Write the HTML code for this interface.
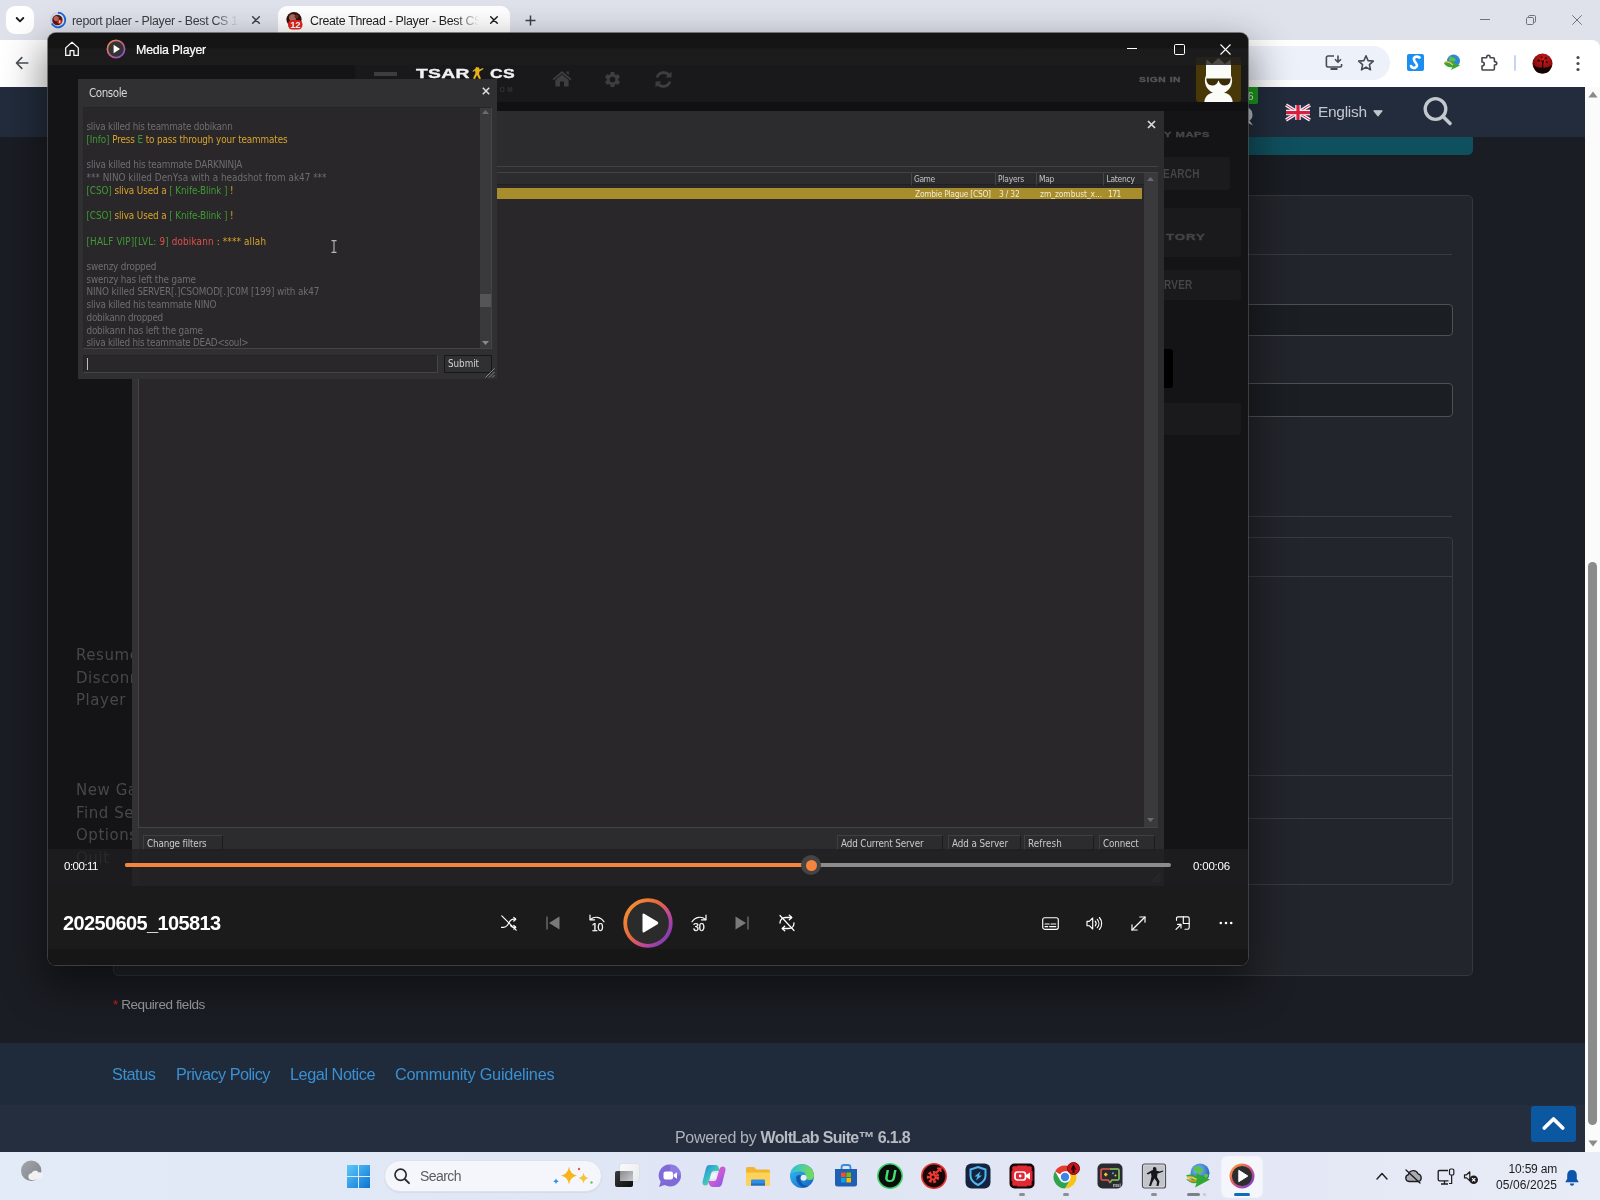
<!DOCTYPE html>
<html lang="en">
<head>
<meta charset="utf-8">
<title>Create Thread - Player - Best CS</title>
<style>
*{box-sizing:border-box;margin:0;padding:0}
html,body{width:1600px;height:1200px;overflow:hidden;background:#1a1d23;font-family:"Liberation Sans","DejaVu Sans",sans-serif;}
.abs{position:absolute}
#root{position:relative;width:1600px;height:1200px;overflow:hidden;will-change:transform}
svg{display:block;overflow:visible}
/* ---------- chrome ---------- */
#tabbar{left:0;top:0;width:1600px;height:87px;background:#dfe2eb}
#toolbar{left:0;top:40px;width:1600px;height:47px;background:#fff;border-radius:0 8px 0 0}
.tabtxt{font-size:12.4px;color:#3c4043;white-space:nowrap;letter-spacing:-0.32px;line-height:15px}
/* ---------- page ---------- */
#page{left:0;top:87px;width:1585px;height:1065px;background:#1a1d23;overflow:hidden}
#pghead{left:0;top:0;width:1585px;height:50px;background:#222c3c}
#teal{left:113px;top:50px;width:1360px;height:18px;background:#0f505e;border-radius:0 0 5px 0}
#form{left:113px;top:108px;width:1360px;height:781px;background:#22252b;border:1px solid #34373d;border-radius:5px}
.hr{height:1px;background:#383b41}
.inp{background:#1b1e23;border:1px solid #4d5055;border-radius:4px}
#foot1{left:0;top:956px;width:1585px;height:62px;background:#1f2a3a}
#foot2{left:0;top:1018px;width:1585px;height:47px;background:#242e3f}
#foot1 a{position:absolute;top:22px;font-size:16.3px;color:#3b90d3;text-decoration:none;white-space:nowrap;letter-spacing:-0.35px;line-height:19px}
/* ---------- scrollbar ---------- */
#sb{left:1585px;top:87px;width:15px;height:1065px;background:#fbfbfb}
/* ---------- taskbar ---------- */
#taskbar{left:0;top:1152px;width:1600px;height:48px;background:linear-gradient(90deg,#e2ebf7 0%,#dfe5f4 45%,#e3e6f5 75%,#e8ecf6 100%)}
.ti{position:absolute;top:10px;width:28px;height:28px}
/* ---------- media player ---------- */
#mp{left:48px;top:33px;width:1200px;height:932px;background:#141316;border-radius:8px;overflow:hidden;box-shadow:0 0 0 1px rgba(80,80,80,.700),0 18px 40px 6px rgba(0,0,0,.450)}
#mptitle{left:0;top:0;width:1200px;height:32px;background:linear-gradient(rgba(20,20,20,.85) 0,rgba(21,21,21,.85) 45%,rgba(30,29,30,.8) 50%,rgba(30,29,30,.8) 100%)}
#video{left:0;top:32px;width:1200px;height:900px;background:#141316;overflow:hidden}
.xb{-webkit-text-stroke:0.350px currentColor}
.gm{position:absolute;left:28px;font-family:"DejaVu Sans",sans-serif;font-size:15px;letter-spacing:0.55px;color:#48474a;white-space:nowrap}
.gf{font-family:"DejaVu Sans Condensed","DejaVu Sans",sans-serif}
.cl{position:absolute;left:2.5px;white-space:nowrap;font-size:9.8px;line-height:12.75px;color:#6e6d70;letter-spacing:-0.1px}
.g{color:#3f9a33}.y{color:#d9a42a}.r{color:#e0504a}
.sl{font-size:8.4px;line-height:12px;color:#c4c3c5;white-space:nowrap}
.btn{position:absolute;height:16px;border:1px solid #3f3e41;border-bottom-color:#1c1b1d;border-right-color:#1c1b1d;font-size:9.800px;line-height:16px;color:#c9c8ca;padding-left:3px;white-space:nowrap}
</style>
</head>
<body>
<div id="root">

<!-- ================= CHROME TAB BAR ================= -->
<div id="tabbar" class="abs">
  <!-- tab search -->
  <div class="abs" style="left:6px;top:6px;width:28px;height:28px;background:#fff;border-radius:9px"></div>
  <svg class="abs" style="left:14px;top:15px" width="12" height="10" viewBox="0 0 12 10"><path d="M2.700 3 L6 6.300 L9.300 3" fill="none" stroke="#1f1f1f" stroke-width="1.9" stroke-linecap="round" stroke-linejoin="round"/></svg>
  <!-- tab 1 -->
  <svg class="abs" style="left:49px;top:11px" width="18" height="18" viewBox="0 0 18 18">
    <circle cx="9" cy="9" r="7.2" fill="none" stroke="#c9d3ea" stroke-width="1.8"/>
    <path d="M9 1.8 A7.2 7.2 0 1 1 2.8 12.6" fill="none" stroke="#1a67d9" stroke-width="1.9"/>
    <circle cx="8.4" cy="9" r="5.2" fill="#5a1512"/>
    <circle cx="7.2" cy="7.6" r="2.6" fill="#b8685a"/>
    <circle cx="10.6" cy="10.8" r="2.3" fill="#e0322c"/>
    <rect x="10.2" y="9.4" width="1" height="2.6" fill="#fff"/>
  </svg>
  <div class="abs tabtxt" style="left:72px;top:13.800px;width:166px;overflow:hidden;-webkit-mask-image:linear-gradient(90deg,#000 86%,transparent 100%);mask-image:linear-gradient(90deg,#000 86%,transparent 100%)">report plaer - Player - Best CS 1.6</div>
  <svg class="abs" style="left:252px;top:16px" width="8" height="8" viewBox="0 0 8 8"><path d="M0.700 0.700 L7.300 7.300 M7.300 0.700 L0.700 7.300" stroke="#3c4043" stroke-width="1.500" stroke-linecap="round"/></svg>
  <!-- tab 2 active -->
  <div class="abs" style="left:278px;top:6px;width:232px;height:34px;background:#fff;border-radius:9px 9px 0 0"></div>
  <svg class="abs" style="left:270px;top:32px" width="8" height="8" viewBox="0 0 8 8"><path d="M8 0 V8 H0 A8 8 0 0 0 8 0Z" fill="#fff"/></svg>
  <svg class="abs" style="left:510px;top:32px" width="8" height="8" viewBox="0 0 8 8"><path d="M0 0 V8 H8 A8 8 0 0 1 0 0Z" fill="#fff"/></svg>
  <svg class="abs" style="left:285px;top:11px" width="20" height="20" viewBox="0 0 20 20">
    <circle cx="9" cy="8.6" r="7.6" fill="#35100f"/>
    <circle cx="7.6" cy="6.8" r="3.6" fill="#a86a5c"/>
    <circle cx="11.5" cy="5.5" r="2" fill="#6d2a24"/>
    <rect x="3" y="9" width="14.5" height="9.5" rx="4.5" fill="#e3241d"/>
    <text x="10.2" y="16.8" font-family="Liberation Sans,sans-serif" font-size="9.5" font-weight="700" fill="#fff" text-anchor="middle" letter-spacing="-0.4">12</text>
  </svg>
  <div class="abs tabtxt" style="left:310px;top:13.800px;width:169px;color:#1f1f1f;overflow:hidden;-webkit-mask-image:linear-gradient(90deg,#000 86%,transparent 100%);mask-image:linear-gradient(90deg,#000 86%,transparent 100%)">Create Thread - Player - Best CS 1.6</div>
  <svg class="abs" style="left:490px;top:16px" width="8" height="8" viewBox="0 0 8 8"><path d="M0.700 0.700 L7.300 7.300 M7.300 0.700 L0.700 7.300" stroke="#1f1f1f" stroke-width="1.500" stroke-linecap="round"/></svg>
  <!-- new tab -->
  <svg class="abs" style="left:524.500px;top:14.500px" width="11" height="11" viewBox="0 0 11 11"><path d="M5.500 0.500 V10.500 M0.500 5.500 H10.500" stroke="#3c4043" stroke-width="1.500"/></svg>
  <!-- window controls -->
  <svg class="abs" style="left:1480px;top:19px" width="10" height="1" viewBox="0 0 10 1"><rect width="10" height="1" fill="#6f737c"/></svg>
  <svg class="abs" style="left:1526px;top:15px" width="10" height="10" viewBox="0 0 10 10"><rect x="0.500" y="2.500" width="7" height="7" rx="1.200" fill="none" stroke="#6f737c"/><path d="M2.500 2.300 V1.700 A1.200 1.200 0 0 1 3.700 0.500 H8.300 A1.200 1.200 0 0 1 9.500 1.700 V6.300 A1.200 1.200 0 0 1 8.300 7.500 H7.700" fill="none" stroke="#6f737c"/></svg>
  <svg class="abs" style="left:1572px;top:15px" width="10" height="10" viewBox="0 0 10 10"><path d="M0.300 0.300 L9.700 9.700 M9.700 0.300 L0.300 9.700" stroke="#6f737c" stroke-width="1"/></svg>
</div>
<div id="toolbar" class="abs">
  <svg class="abs" style="left:15px;top:16px" width="14" height="14" viewBox="0 0 14 14"><path d="M12.800 7 H2 M6.800 1.600 L1.500 7 L6.800 12.400" fill="none" stroke="#4a4e55" stroke-width="1.600" stroke-linecap="round" stroke-linejoin="round"/></svg>
  <!-- omnibox -->
  <div class="abs" style="left:70px;top:6px;width:1320px;height:34px;border-radius:17px;background:#edf1fa"></div>
  <svg class="abs" style="left:1325px;top:14px" width="18" height="18" viewBox="0 0 18 18"><path d="M9 2 H3 A1.6 1.6 0 0 0 1.4 3.6 V11.4 A1.6 1.6 0 0 0 3 13 H15 A1.6 1.6 0 0 0 16.6 11.4 V10" fill="none" stroke="#474b52" stroke-width="1.6"/><path d="M5.5 16 H12.5 V14 H5.5Z" fill="#474b52"/><path d="M13 1.5 V8 M10 5.2 L13 8.2 L16 5.2" fill="none" stroke="#474b52" stroke-width="1.6"/></svg>
  <svg class="abs" style="left:1357px;top:14px" width="18" height="18" viewBox="0 0 18 18"><path d="M9 1.8 L11.1 6.6 L16.3 7.1 L12.4 10.6 L13.5 15.8 L9 13.1 L4.5 15.8 L5.6 10.6 L1.7 7.1 L6.9 6.6Z" fill="none" stroke="#474b52" stroke-width="1.6" stroke-linejoin="round"/></svg>
  <!-- S extension -->
  <svg class="abs" style="left:1407px;top:14px" width="17" height="17" viewBox="0 0 17 17"><rect width="17" height="17" rx="2" fill="#1b8ef0"/><path d="M12.5 3.5 C9 1.5 5.5 3.5 7.5 7 C9.5 10 11.5 11.5 8.5 13.5 C6.5 14.5 4.5 13.5 4 12" fill="none" stroke="#fff" stroke-width="2.6" stroke-linecap="round"/></svg>
  <!-- IDM -->
  <svg class="abs" style="left:1443px;top:13px" width="19" height="19" viewBox="0 0 19 19"><circle cx="10.5" cy="8" r="6.5" fill="#2f86d6"/><path d="M7 3 C9 5 12 4 13 7 C11 9 8 9 6 7Z" fill="#5fbf3a"/><path d="M1 10 C4 7 8 9 10 11 L9 8.5 L17 12.5 L8 17 L9.5 14 C6 15 2 13 1 10Z" fill="#3aa635"/><path d="M2 9 C5 8 8 10 10 12" fill="none" stroke="#e8c23a" stroke-width="1.4"/></svg>
  <!-- puzzle -->
  <svg class="abs" style="left:1480px;top:13px" width="19" height="19" viewBox="0 0 19 19"><path d="M2 4.800 H6.600 Q6.600 2.200 8.400 2.200 Q10.200 2.200 10.200 4.800 H13.200 Q14.400 4.800 14.400 6 V8.600 Q16.800 8.600 16.800 10.300 Q16.800 12 14.400 12 V15.800 Q14.400 17 13.200 17 H2.800 Q2 17 2 16.200 V13 Q4.300 12.800 4.300 11 Q4.300 9.200 2 9Z" fill="none" stroke="#43474e" stroke-width="1.600" stroke-linejoin="round"/></svg>
  <div class="abs" style="left:1514px;top:15px;width:2px;height:16px;background:#c7d4f3;border-radius:1px"></div>
  <!-- avatar -->
  <svg class="abs" style="left:1532px;top:13px" width="21" height="21" viewBox="0 0 22 22"><defs><radialGradient id="avg" cx=".55" cy=".3" r=".75"><stop offset="0" stop-color="#d81a1a"/><stop offset=".6" stop-color="#8e0d0f"/><stop offset="1" stop-color="#1a0303"/></radialGradient></defs><circle cx="11" cy="11" r="10.500" fill="url(#avg)"/><path d="M1.500 13 Q6 16 10.300 15.500 L10.600 10 L9 7 L11 8.500 L13 6.500 L12 10 L11.800 15.500 Q16 16 20.500 13 Q19 21.500 11 21.500 Q3 21.500 1.500 13Z" fill="#150203"/><circle cx="7" cy="8" r="1.500" fill="#2a0405" opacity=".8"/><circle cx="14.500" cy="5.500" r="1.300" fill="#2a0405" opacity=".8"/><circle cx="15.500" cy="9.500" r="1.300" fill="#2a0405" opacity=".7"/><circle cx="10" cy="4.500" r="1.200" fill="#2a0405" opacity=".7"/></svg>
  <svg class="abs" style="left:1576px;top:15px" width="4" height="18" viewBox="0 0 4 18"><circle cx="2" cy="2.5" r="1.6" fill="#474b52"/><circle cx="2" cy="8.5" r="1.6" fill="#474b52"/><circle cx="2" cy="14.5" r="1.6" fill="#474b52"/></svg>
</div>

<!-- ================= PAGE ================= -->
<div id="page" class="abs">
  <div id="pghead" class="abs">
    <div class="abs" style="left:1238px;top:0;width:20px;height:17px;background:#1c9a1f;border-radius:0 0 2px 2px;color:#e8f5e8;font-size:11px;text-align:right;padding-right:4.500px;line-height:18px">6</div>
    <svg class="abs" style="left:1228px;top:18px" width="26" height="22" viewBox="0 0 26 22"><path d="M13 1.500 Q24.500 1.500 24.500 9.500 Q24.500 14 21.500 15.500 L25 20.500 L18 17 Q16 17.500 13 17.500Z" fill="#b9bdc4"/></svg>
    <!-- flag -->
    <svg class="abs" style="left:1286px;top:18px" width="24" height="15" viewBox="0 0 48 30">
      <rect width="48" height="30" fill="#27335a"/>
      <path d="M0 0 L48 30 M48 0 L0 30" stroke="#f4f4f6" stroke-width="6.500"/>
      <path d="M0 0 L48 30 M48 0 L0 30" stroke="#d92040" stroke-width="2"/>
      <path d="M24 0 V30 M0 15 H48" stroke="#f4f4f6" stroke-width="11"/>
      <path d="M24 0 V30 M0 15 H48" stroke="#d92040" stroke-width="6.500"/>
    </svg>
    <div class="abs" style="left:1318px;top:16px;font-size:15.500px;color:#c3c7ce;letter-spacing:-0.300px;white-space:nowrap;line-height:18px">English</div>
    <svg class="abs" style="left:1372.500px;top:22.500px" width="10" height="7" viewBox="0 0 10 7"><path d="M1 0.800 H9 L5 5.800Z" fill="#c3c7ce" stroke="#c3c7ce" stroke-width="1.200" stroke-linejoin="round"/></svg>
    <svg class="abs" style="left:1422px;top:9px" width="32" height="32" viewBox="0 0 32 32"><circle cx="13.500" cy="13" r="10.300" fill="none" stroke="#c3c7ce" stroke-width="3.300"/><path d="M21 20.500 L28 27.500" stroke="#c3c7ce" stroke-width="3.600" stroke-linecap="round"/></svg>
  </div>
  <div id="teal" class="abs"></div>
  <div id="form" class="abs">
    <div class="abs hr" style="left:20px;top:58px;width:1318px"></div>
    <div class="abs inp" style="left:20px;top:108px;width:1319px;height:32px"></div>
    <div class="abs inp" style="left:20px;top:187px;width:1319px;height:34px"></div>
    <div class="abs hr" style="left:20px;top:320px;width:1318px"></div>
    <div class="abs" style="left:20px;top:341px;width:1319px;height:348px;border:1px solid #383b41;border-radius:4px"></div>
    <div class="abs hr" style="left:20px;top:380px;width:1318px"></div>
    <div class="abs hr" style="left:20px;top:579px;width:1318px"></div>
    <div class="abs hr" style="left:20px;top:622px;width:1318px"></div>
  </div>
  <div class="abs" style="left:113px;top:910px;font-size:13.500px;color:#9b9ea4;white-space:nowrap;letter-spacing:-0.420px"><span style="color:#d8201c">*</span> Required fields</div>
  <div id="foot1" class="abs">
    <a style="left:112px;letter-spacing:-0.440px">Status</a>
    <a style="left:176px;letter-spacing:-0.530px">Privacy Policy</a>
    <a style="left:290px;letter-spacing:-0.460px">Legal Notice</a>
    <a style="left:395px;letter-spacing:-0.220px">Community Guidelines</a>
  </div>
  <div id="foot2" class="abs">
    <div class="abs" style="left:675px;top:22.500px;font-size:16px;color:#aeb2b8;white-space:nowrap;letter-spacing:-0.310px;line-height:19px">Powered by <b style="color:#b8bcc2;letter-spacing:-0.640px">WoltLab Suite&trade; 6.1.8</b></div>
    <div class="abs" style="left:1531px;top:1px;width:45px;height:36px;background:#0b57a0;border-radius:3px"></div>
    <svg class="abs" style="left:1541px;top:10px" width="25" height="17" viewBox="0 0 25 17"><path d="M3.300 13 L12.500 4 L21.700 13" fill="none" stroke="#fff" stroke-width="3.800" stroke-linecap="round" stroke-linejoin="round"/></svg>
  </div>
</div>
<div id="sb" class="abs">
  <svg class="abs" style="left:3px;top:4px" width="10" height="7" viewBox="0 0 10 7"><path d="M5 0.5 L9.6 6.5 H0.4Z" fill="#8b8b8b"/></svg>
  <div class="abs" style="left:3px;top:475px;width:9px;height:563px;border-radius:5px;background:#8b8b8b"></div>
  <svg class="abs" style="left:3px;top:1053px" width="10" height="7" viewBox="0 0 10 7"><path d="M5 6.5 L9.6 0.5 H0.4Z" fill="#8b8b8b"/></svg>
</div>

<!-- ================= TASKBAR ================= -->
<div id="taskbar" class="abs">
  <!-- weather -->
  <svg class="abs" style="left:20px;top:6px" width="26" height="24" viewBox="0 0 26 24"><defs><linearGradient id="wg" x1="0" y1="0" x2="1" y2="1"><stop offset="0" stop-color="#a3a6ab"/><stop offset="1" stop-color="#7f8287"/></linearGradient></defs><circle cx="11.200" cy="12.700" r="10.200" fill="url(#wg)"/><path d="M11 22 A3.400 3.400 0 0 1 11.500 15.300 A4 4 0 0 1 18.600 14.400 A3.300 3.300 0 0 1 23 17.400 Q23 19.500 21 20.300 Q17 22.500 11 22Z" fill="#f1f1f3"/></svg>
  <!-- windows logo -->
  <svg class="abs" style="left:347px;top:13px" width="23" height="23" viewBox="0 0 23 23"><defs><linearGradient id="wl" x1="0" y1="0" x2="1" y2="1"><stop offset="0" stop-color="#5dc9fb"/><stop offset="1" stop-color="#0a74d2"/></linearGradient></defs><path d="M0 0 H11 V11 H0Z M12 0 H23 V11 H12Z M0 12 H11 V23 H0Z M12 12 H23 V23 H12Z" fill="url(#wl)"/></svg>
  <!-- search -->
  <div class="abs" style="left:384px;top:8px;width:218px;height:32px;border-radius:16px;background:#f4f6fc;border:1px solid #dde1ec;box-shadow:0 1px 1px rgba(120,130,160,.120)"></div>
  <svg class="abs" style="left:393px;top:15px" width="18" height="18" viewBox="0 0 18 18"><circle cx="7.6" cy="7.8" r="5.6" fill="none" stroke="#2a2a2d" stroke-width="1.7"/><path d="M11.8 12 L16 16.2" stroke="#2a2a2d" stroke-width="1.9" stroke-linecap="round"/></svg>
  <div class="abs" style="left:420px;top:15px;font-size:14px;color:#5a5c62;letter-spacing:-0.55px;line-height:18px;white-space:nowrap">Search</div>
  <svg class="abs" style="left:552px;top:12px" width="44" height="24" viewBox="0 0 44 24"><path d="M17 2.5 Q18 10 25 11.5 Q18 13 17 20.5 Q16 13 9 11.5 Q16 10 17 2.5Z" fill="#f7b51b"/><path d="M31.5 8.5 Q32.2 13 36.5 14 Q32.2 15 31.5 19.5 Q30.8 15 26.5 14 Q30.8 13 31.5 8.5Z" fill="#f9c339"/><path d="M4 14.5 Q4.4 16.8 6.8 17.3 Q4.4 17.8 4 20 Q3.6 17.8 1.2 17.3 Q3.6 16.8 4 14.5Z" fill="#2f8fe8"/><circle cx="27" cy="5" r="1.2" fill="#e8574a"/><circle cx="39.5" cy="18.5" r="1.2" fill="#6fbf5a"/></svg>
  <!-- task view -->
  <div class="abs" style="left:620px;top:12px;width:19px;height:17px;border-radius:2px;background:linear-gradient(135deg,#fafafa,#e9eaee);box-shadow:0 0 1px rgba(0,0,0,.25)"></div>
  <div class="abs" style="left:615px;top:19px;width:18px;height:16px;border-radius:2px;background:linear-gradient(135deg,#3a3a3c,#0c0c0d)"></div>
  <div class="abs" style="left:620px;top:19px;width:13px;height:10px;background:linear-gradient(135deg,#8a8b8f,#c9cacf)"></div>
  <!-- teams/meet -->
  <svg class="abs" style="left:656.0px;top:10.0px" width="28" height="28" viewBox="0 0 28 28"><path d="M14 2.5 A11 11 0 0 1 14 24.5 A11 11 0 0 1 8.6 23.1 L3 25 L4.7 19.8 A11 11 0 0 1 14 2.5Z" fill="#7f6ad8"/><path d="M14 2.5 A11 11 0 0 1 25 13.5 L14 13.5Z" fill="#9a86ea" opacity=".6"/><rect x="7.5" y="9.5" width="9.5" height="8" rx="2" fill="#fff"/><path d="M17.6 12.5 L21 10.3 V16.7 L17.6 14.5Z" fill="#fff"/></svg>
  <!-- copilot -->
  <svg class="abs" style="left:700.0px;top:10.0px" width="28" height="28" viewBox="0 0 28 28"><defs><linearGradient id="cp1" x1="0" y1="0" x2="1" y2="1"><stop offset="0" stop-color="#2a7fe0"/><stop offset=".5" stop-color="#38c6c0"/><stop offset="1" stop-color="#f2c13a"/></linearGradient><linearGradient id="cp2" x1="0" y1="0" x2="1" y2="1"><stop offset="0" stop-color="#e4548f"/><stop offset=".5" stop-color="#c95ad8"/><stop offset="1" stop-color="#7a5ae8"/></linearGradient></defs><path d="M9 3 H15.5 Q18 3 18.7 5.4 L19.8 9 H14 Q12 9 11.4 11 L8.5 21 Q7.8 23.5 5.5 23.5 Q2.5 23.5 2.5 20.5 Q2.5 19.5 3 18 L6 6 Q6.8 3 9 3Z" fill="url(#cp1)"/><path d="M19 25 H12.5 Q10 25 9.3 22.6 L8.2 19 H14 Q16 19 16.6 17 L19.5 7 Q20.2 4.5 22.5 4.5 Q25.5 4.5 25.5 7.5 Q25.5 8.5 25 10 L22 22 Q21.2 25 19 25Z" fill="url(#cp2)"/><path d="M11.5 11 H16.8 L15.5 16.5 H10Z" fill="#f4f4fb" opacity=".85"/></svg>
  <!-- explorer -->
  <svg class="abs" style="left:744.0px;top:10.0px" width="28" height="28" viewBox="0 0 28 28"><path d="M2 6.5 Q2 5 3.5 5 H10 L12.5 7.5 H24.5 Q26 7.5 26 9 V22 Q26 23.5 24.5 23.5 H3.5 Q2 23.5 2 22Z" fill="#f2b52c"/><path d="M2 10.5 H26 V22 Q26 23.5 24.5 23.5 H3.5 Q2 23.5 2 22Z" fill="#fcd25a"/><path d="M8 17.5 H20 Q21 17.5 21 18.5 V23.5 H7 V18.5 Q7 17.5 8 17.5Z" fill="#2f8de4"/><rect x="7" y="21.5" width="14" height="2" fill="#1b6fc4"/></svg>
  <!-- edge -->
  <svg class="abs" style="left:788.0px;top:10.0px" width="28" height="28" viewBox="0 0 28 28"><defs><linearGradient id="eg1" x1="0" y1="0" x2="1" y2="1"><stop offset="0" stop-color="#35c1f1"/><stop offset="1" stop-color="#1360c4"/></linearGradient><linearGradient id="eg2" x1="0" y1="0" x2="1" y2="0"><stop offset="0" stop-color="#2bc0e4"/><stop offset="1" stop-color="#7bdc4a"/></linearGradient></defs><circle cx="14" cy="14" r="12" fill="url(#eg1)"/><path d="M2.3 12 A12 12 0 0 1 26 13 Q26 18 21.5 18 Q17.5 18 17.8 14.5 Q18 10 13 9.5 Q6 9 2.3 12Z" fill="url(#eg2)"/><path d="M8 15 Q8 21 13.5 24.5 Q17 26 21 24 Q14 24 12.5 18.5 Q11.8 15.5 14 13.5 Q10 12 8 15Z" fill="#0e4fa8" opacity=".85"/><circle cx="15.6" cy="15.8" r="3" fill="#e9eef8"/></svg>
  <!-- store -->
  <svg class="abs" style="left:832.0px;top:10.0px" width="28" height="28" viewBox="0 0 28 28"><path d="M9.5 7 V5.5 Q9.5 3 12 3 H16 Q18.500 3 18.5 5.5 V7" fill="none" stroke="#3a8be0" stroke-width="1.8"/><path d="M3 7 H25 V22 Q25 24.5 22.5 24.5 H5.5 Q3 24.5 3 22Z" fill="#1f5fb4"/><rect x="9" y="10.5" width="4.6" height="4.6" fill="#f25022"/><rect x="14.4" y="10.500" width="4.6" height="4.6" fill="#7fba00"/><rect x="9" y="15.900" width="4.6" height="4.600" fill="#00a4ef"/><rect x="14.4" y="15.9" width="4.6" height="4.6" fill="#ffb900"/></svg>
  <!-- iobit uninstaller -->
  <svg class="abs" style="left:876.0px;top:10.0px" width="28" height="28" viewBox="0 0 28 28"><circle cx="14" cy="14" r="12.2" fill="#0b0f0c" stroke="#3fd36b" stroke-width="1.6"/><text x="14.3" y="20" font-family="Liberation Sans,sans-serif" font-size="16.5" font-style="italic" font-weight="700" fill="#42e06f" text-anchor="middle">U</text></svg>
  <!-- driver booster -->
  <svg class="abs" style="left:920.0px;top:10.0px" width="28" height="28" viewBox="0 0 28 28"><circle cx="14" cy="14" r="12.2" fill="#160708" stroke="#e9332f" stroke-width="1.6"/><circle cx="13" cy="15" r="4.6" fill="none" stroke="#ee3a32" stroke-width="3.2" stroke-dasharray="2.6 1.6"/><circle cx="13" cy="15" r="3.4" fill="#ee3a32"/><circle cx="13" cy="15" r="1.5" fill="#160708"/><path d="M15.5 11.5 L20.5 6.5 M17 6.3 H20.7 V10" fill="none" stroke="#ee3a32" stroke-width="1.8"/></svg>
  <!-- shield app -->
  <svg class="abs" style="left:964.0px;top:10.0px" width="28" height="28" viewBox="0 0 28 28"><rect x="1.5" y="1.5" width="25" height="25" rx="6" fill="#16233f"/><path d="M14 5 L21.5 7.5 V13.5 Q21.5 19.5 14 23 Q6.5 19.5 6.5 13.5 V7.5Z" fill="none" stroke="#4db8f0" stroke-width="2"/><path d="M10.500 14.5 L16.5 9.5 L15 13.5 H18 L12 18.5 L13.5 14.5Z" fill="#4db8f0"/></svg>
  <!-- recorder -->
  <svg class="abs" style="left:1008.0px;top:10.0px" width="28" height="28" viewBox="0 0 28 28"><rect x="1.5" y="1.5" width="25" height="25" rx="5" fill="#150708"/><rect x="3.5" y="3.5" width="21" height="21" rx="3.5" fill="#e32732"/><path d="M3.5 9 V5.5 Q3.5 3.500 5.5 3.5 H9 M19 3.5 H22.5 Q24.5 3.5 24.5 5.5 V9 M24.5 19 V22.5 Q24.5 24.5 22.5 24.5 H19 M9 24.5 H5.5 Q3.5 24.5 3.5 22.5 V19" fill="none" stroke="#150708" stroke-width="1.6"/><rect x="7" y="10" width="10.5" height="8" rx="2.5" fill="none" stroke="#fff" stroke-width="1.7"/><path d="M18 13 L22 10.5 V17.500 L18 15Z" fill="#fff"/><circle cx="12.2" cy="14" r="1.4" fill="#fff"/></svg>
  <div class="abs" style="left:1019.0px;top:41px;width:6px;height:3px;border-radius:2px;background:#8b8e97"></div>
  <!-- chrome -->
  <svg class="abs" style="left:1052.0px;top:10.0px" width="28" height="28" viewBox="0 0 28 28"><circle cx="13" cy="15" r="11.5" fill="#fff"/><path d="M13 3.500 A11.5 11.5 0 0 1 22.960 9.25 L13 9.25 A5.75 5.750 0 0 0 8.020 12.125 L3.04 9.25 A11.5 11.5 0 0 1 13 3.5Z" fill="#e33b2e"/><path d="M22.960 9.25 A11.5 11.5 0 0 1 13 26.5 L17.98 17.875 A5.75 5.75 0 0 0 17.98 12.125 L18 9.25Z" fill="#f7c21a"/><path d="M13 26.500 A11.5 11.5 0 0 1 3.04 9.25 L8.020 17.875 A5.75 5.75 0 0 0 17.98 17.875Z" fill="#2ea44f"/><circle cx="13" cy="15" r="5.2" fill="#fff"/><circle cx="13" cy="15" r="4.200" fill="#3f82e8"/><circle cx="21.5" cy="6.500" r="6" fill="#c5161a"/><circle cx="21.5" cy="6.5" r="6" fill="none" stroke="#7a0c10" stroke-width="1"/><path d="M21.500 2 L24.5 8 L21.5 6.800 L18.5 8Z M20.5 7 H22.5 V11 H20.500Z" fill="#260406"/></svg>
  <div class="abs" style="left:1063.0px;top:41px;width:6px;height:3px;border-radius:2px;background:#8b8e97"></div>
  <!-- msi -->
  <svg class="abs" style="left:1096.0px;top:10.0px" width="28" height="28" viewBox="0 0 28 28"><rect x="1.500" y="1.5" width="25" height="25" rx="5" fill="#2a2b30"/><path d="M5 8.500 Q5 7 6.5 7 H21.500 Q23 7 23 8.5 V16.5 Q23 18 21.5 18 H16 L14 20.5 L12 18 H6.5 Q5 18 5 16.5Z" fill="none" stroke="#e8544a" stroke-width="1.600"/><path d="M14 7 H21.5 Q23 7 23 8.5 V16.5 Q23 18 21.5 18 H16 L14 20.500" fill="none" stroke="#58c25a" stroke-width="1.6"/><path d="M8 12.500 H11.5 M9.75 10.75 V14.250" stroke="#f2c840" stroke-width="1.5"/><circle cx="17" cy="11.3" r="1" fill="#58a6f0"/><circle cx="19.5" cy="13.500" r="1" fill="#f2c840"/><text x="21" y="24.5" font-family="Liberation Sans,sans-serif" font-size="4.5" font-weight="700" fill="#d0d0d4" text-anchor="middle">msi</text></svg>
  <!-- cs 1.6 -->
  <svg class="abs" style="left:1140.0px;top:10.0px" width="28" height="28" viewBox="0 0 28 28"><rect x="2.500" y="2" width="23" height="24" rx="2" fill="#dcdde0" stroke="#4c4f57" stroke-width="1.2"/><rect x="4" y="3.5" width="20" height="21" fill="#c2c4c9"/><path d="M14.500 5 Q16.5 5 16.500 7 L16.2 8.5 L19.5 9.5 L23 8.500 L23.2 9.500 L19.5 11 L17.5 11.500 L17 15 L19.5 19.5 L18.5 24 H16.5 L17 20 L14.500 16.5 L12.5 20 L11 24 H9 L10.5 19 L11.500 14.5 L11 11 L8 12.500 L6.5 11.5 L11.5 8.5 L13 8 Q12.5 5 14.5 5Z" fill="#15171c"/></svg>
  <div class="abs" style="left:1151.0px;top:41px;width:6px;height:3px;border-radius:2px;background:#8b8e97"></div>
  <!-- idm -->
  <svg class="abs" style="left:1184.0px;top:10.0px" width="28" height="28" viewBox="0 0 28 28"><defs><radialGradient id="gl" cx=".4" cy=".35" r=".7"><stop offset="0" stop-color="#7cc4f6"/><stop offset="1" stop-color="#1b58b8"/></radialGradient></defs><circle cx="16" cy="11" r="9.5" fill="url(#gl)"/><path d="M11 4.500 Q14 3 16 5.500 Q19 6 19 9 Q17 12 14 11 Q12 9 10 9 Q9.5 6 11 4.500Z" fill="#5fc243"/><path d="M20 12 Q23 11 24.500 13 Q23 17 20.500 17.500Z" fill="#5fc243"/><path d="M2 13.500 Q7 11 12.500 14.500 L12 11 L26 17.500 L11 25.500 L12.5 21 Q6 22 2 17 Q5 18 8 17.500 Q4 16.500 2 13.5Z" fill="#2fa836"/><path d="M3 15.500 Q8 14.500 12.500 17.500" fill="none" stroke="#f0c43c" stroke-width="1.8"/><path d="M4.500 18 Q8.500 19.500 12.5 19" fill="none" stroke="#e8912c" stroke-width="1.400"/></svg>
  <div class="abs" style="left:1186.5px;top:41px;width:13px;height:3px;border-radius:2px;background:#7d808a"></div><div class="abs" style="left:1202.5px;top:41px;width:3px;height:3px;border-radius:2px;background:#c5c8d2"></div>
  <!-- media player (active) -->
  <div class="abs" style="left:1222px;top:5px;width:40px;height:40px;border-radius:5px;background:rgba(255,255,255,.62);box-shadow:0 0 0 1px rgba(255,255,255,.5)"></div>
  <svg class="abs" style="left:1228.0px;top:10.0px" width="28" height="28" viewBox="0 0 28 28"><defs><linearGradient id="mpg" x1="0.100" y1="0.100" x2="0.900" y2="0.900"><stop offset="0" stop-color="#f5923a"/><stop offset=".500" stop-color="#d4567a"/><stop offset="1" stop-color="#7d45c8"/></linearGradient></defs><circle cx="14" cy="14" r="11.300" fill="#2e2c2e" stroke="url(#mpg)" stroke-width="2.400"/><path d="M10.800 8.300 L19.800 14 L10.800 19.700Z" fill="#fff" stroke="#fff" stroke-width="1" stroke-linejoin="round"/></svg>
  <div class="abs" style="left:1234.0px;top:41px;width:16px;height:3px;border-radius:2px;background:#0f6cbd"></div>
  <!-- tray -->
  <svg class="abs" style="left:1376px;top:20px" width="12" height="8" viewBox="0 0 12 8"><path d="M1 7 L6 1.500 L11 7" fill="none" stroke="#1c1c1e" stroke-width="1.400" stroke-linecap="round" stroke-linejoin="round"/></svg>
  <svg class="abs" style="left:1404px;top:16px" width="19" height="17" viewBox="0 0 19 17"><path d="M5 13.500 A3.500 3.500 0 0 1 4.500 6.600 A5 5 0 0 1 14 5.800 A4 4 0 0 1 14.500 13.500Z" fill="#a9abb0" stroke="#1c1c1e" stroke-width="1.300" stroke-linejoin="round"/><path d="M2 2 L16 15" stroke="#1c1c1e" stroke-width="1.300" stroke-linecap="round"/></svg>
  <svg class="abs" style="left:1437px;top:16px" width="18" height="18" viewBox="0 0 18 18"><path d="M11 2.500 H2.500 Q1.200 2.500 1.200 3.800 V11.500 Q1.200 12.800 2.500 12.800 H11.500" fill="none" stroke="#1c1c1e" stroke-width="1.300"/><path d="M4 16 H11 M7.500 13 V16" stroke="#1c1c1e" stroke-width="1.300"/><rect x="12.500" y="1" width="4.300" height="6" rx="1.200" fill="none" stroke="#1c1c1e" stroke-width="1.200"/><path d="M14.650 7 V15.500 H12" fill="none" stroke="#1c1c1e" stroke-width="1.200"/></svg>
  <svg class="abs" style="left:1462px;top:16px" width="20" height="18" viewBox="0 0 20 18"><path d="M2.500 6.800 H4.600 L7.800 3.800 V12.700 L4.600 9.900 H2.500Z" fill="none" stroke="#1c1c1e" stroke-width="1.200" stroke-linejoin="round"/><circle cx="11.700" cy="11.700" r="4.300" fill="#1c1c1e"/><path d="M10.100 10.100 L13.300 13.300 M13.300 10.100 L10.100 13.300" stroke="#fff" stroke-width="1.200"/></svg>
  <div class="abs" style="left:1457px;top:8.5px;width:100px;text-align:right;font-size:12px;color:#1c1c1e;line-height:16px;white-space:nowrap;letter-spacing:-0.200px">10:59 am</div>
  <div class="abs" style="left:1457px;top:24.5px;width:100px;text-align:right;font-size:12px;color:#1c1c1e;line-height:16px;white-space:nowrap;letter-spacing:0.1px">05/06/2025</div>
  <svg class="abs" style="left:1564px;top:16.5px" width="16" height="18" viewBox="0 0 16 18"><path d="M8 1 Q12.800 1 12.800 6.500 V10 L14.800 13.200 H1.200 L3.200 10 V6.500 Q3.200 1 8 1Z" fill="#0b55ad"/><path d="M5.800 14.500 H10.200 Q10 16.800 8 16.800 Q6 16.800 5.800 14.500Z" fill="#0b55ad"/></svg>
</div>

<!-- ================= MEDIA PLAYER ================= -->
<div id="mp" class="abs">
  <div id="video" class="abs">
    <!-- launcher header -->
    <div class="abs" style="left:307px;top:0;width:893px;height:37px;background:#19181a"></div>
    <div class="abs" style="left:307px;top:37px;width:893px;height:9px;background:#111012"></div>
    
    <div class="abs" style="left:326px;top:7px;width:23px;height:4px;background:#3d3c3f"></div>
    <div class="abs" style="left:326px;top:15px;width:23px;height:4px;background:#3d3c3f"></div>
    <div class="abs xb" style="left:368px;top:2px;font-size:12.5px;font-weight:700;color:#f2f2f2;white-space:nowrap;transform-origin:0 0;transform:scaleX(1.540);letter-spacing:0.200px;line-height:14px">TSAR</div>
    <svg class="abs" style="left:422px;top:2px" width="16" height="12" viewBox="0 0 16 12"><path d="M6 0 L9 0.5 L9.5 2.5 L13 1 L13.5 2 L9.5 4.5 L9 7 L11 11.5 L9 12 L7 8 L5 12 L3 11.5 L5.5 6 L5 3.5 L3 5 L2.5 4 L5.5 1.5Z" fill="#e7b219"/></svg>
    <div class="abs xb" style="left:442px;top:2px;font-size:12.5px;font-weight:700;color:#f2f2f2;white-space:nowrap;transform-origin:0 0;transform:scaleX(1.400);letter-spacing:0.200px;line-height:14px">CS</div>
    <div class="abs" style="left:440px;top:21px;font-size:6.500px;font-weight:700;color:#343336;white-space:nowrap;letter-spacing:2.600px;line-height:8px">.COM</div>
    <!-- home / gear / refresh -->
    <svg class="abs" style="left:504px;top:5px" width="20" height="17" viewBox="0 0 20 17"><path d="M10 1 L19.5 9 L18.3 10.3 L10 3.4 L1.7 10.3 L0.5 9Z M14.5 1.5 H16.8 V5 L14.5 3.1Z M3.4 10 L10 4.6 L16.6 10 V16.5 H12 V11.5 H8 V16.5 H3.4Z" fill="#3e3d40"/></svg>
    <svg class="abs" style="left:555px;top:5px" width="19" height="19" viewBox="0 0 24 24"><path d="M19.14 12.94c.04-.3.06-.61.06-.94 0-.32-.02-.64-.07-.94l2.03-1.58a.49.49 0 0 0 .12-.61l-1.92-3.32a.49.49 0 0 0-.59-.22l-2.39.96c-.5-.38-1.03-.7-1.62-.94l-.36-2.54a.48.48 0 0 0-.48-.41h-3.84c-.24 0-.43.17-.47.41l-.36 2.54c-.59.24-1.13.57-1.62.94l-2.39-.96a.48.48 0 0 0-.59.22L2.74 8.87c-.12.21-.08.47.12.61l2.03 1.58c-.05.3-.09.63-.09.94s.02.64.07.94l-2.03 1.58a.49.49 0 0 0-.12.61l1.92 3.32c.12.22.37.29.59.22l2.39-.96c.5.38 1.03.7 1.62.94l.36 2.54c.05.24.24.41.48.41h3.84c.24 0 .44-.17.47-.41l.36-2.54c.59-.24 1.13-.56 1.62-.94l2.39.96c.22.08.47 0 .59-.22l1.92-3.32c.12-.22.07-.47-.12-.61l-2.01-1.58zM12 15.6A3.6 3.6 0 1 1 12 8.4a3.6 3.6 0 0 1 0 7.2z" fill="#3e3d40"/></svg>
    <svg class="abs" style="left:606px;top:5px" width="19" height="19" viewBox="0 0 19 19"><path d="M15.8 6.2 A7 7 0 0 0 3 7.5" fill="none" stroke="#3e3d40" stroke-width="2.6"/><path d="M17.5 1.5 V7.5 H11.5Z" fill="#3e3d40"/><path d="M3.2 12.8 A7 7 0 0 0 16 11.5" fill="none" stroke="#3e3d40" stroke-width="2.6"/><path d="M1.5 17.5 V11.5 H7.5Z" fill="#3e3d40"/></svg>
    <div class="abs xb" style="left:1091px;top:9.5px;font-size:7.700px;font-weight:700;color:#555457;white-space:nowrap;transform-origin:0 0;transform:scaleX(1.34);letter-spacing:0.400px;line-height:9px">SIGN IN</div>
    <!-- right strip buttons -->
    <div class="abs" style="left:1116px;top:92px;width:66px;height:33px;background:#1b1a1c;border-radius:0 3px 3px 0"></div>
    <div class="abs" style="left:1116px;top:143px;width:77px;height:49px;background:#1a191b;border-radius:0 3px 3px 0"></div>
    <div class="abs" style="left:1116px;top:205px;width:77px;height:30px;background:#1a191b;border-radius:0 3px 3px 0"></div>
    <div class="abs" style="left:1116px;top:338px;width:77px;height:32px;background:#1a191b;border-radius:0 3px 3px 0"></div>
    <div class="abs" style="left:1116px;top:284px;width:9px;height:39px;background:#000;border-radius:0 3px 3px 0"></div>
    <div class="abs xb" style="left:1116px;top:65px;font-size:8px;font-weight:700;color:#464548;white-space:nowrap;transform-origin:0 0;transform:scaleX(1.400);letter-spacing:0.400px;line-height:10px">Y MAPS</div>
    <div class="abs" style="left:1114.500px;top:102px;font-size:12.5px;font-weight:700;color:#454447;white-space:nowrap;letter-spacing:0.3px;line-height:14px;transform-origin:0 0;transform:scaleX(.800)">EARCH</div>
    <div class="abs xb" style="left:1117.500px;top:167px;font-size:8.5px;font-weight:700;color:#454447;white-space:nowrap;transform-origin:0 0;transform:scaleX(1.560);letter-spacing:0.6px;line-height:10px">TORY</div>
    <div class="abs" style="left:1115.500px;top:213px;font-size:12.5px;font-weight:700;color:#454447;white-space:nowrap;letter-spacing:0.3px;line-height:14px;transform-origin:0 0;transform:scaleX(.800)">RVER</div>

    <!-- left menu -->
    <div class="gm" style="top:580.6px">Resume Game</div>
    <div class="gm" style="top:603.6px">Disconnect</div>
    <div class="gm" style="top:625.6px">Player List</div>
    <div class="gm" style="top:715.6px">New Game</div>
    <div class="gm" style="top:738.6px">Find Servers</div>
    <div class="gm" style="top:760.6px">Options</div>
    <div class="gm" style="top:783.6px">Quit</div>

    <!-- server browser panel -->
    <div class="abs" style="left:84px;top:46px;width:1032px;height:775px;background:#2c2b2e"></div>
    <div class="abs" style="left:84px;top:46px;width:7px;height:775px;background:#323134"></div>
    <div class="abs" style="left:91px;top:101px;width:1019px;height:1px;background:#424144"></div>
    <div id="list" class="abs" style="left:90px;top:107px;width:1020px;height:656px;background:#29272a;border:1px solid #434245;border-right-color:#3a393c"></div>
    <!-- header cells -->
    <div class="abs" style="left:92px;top:108px;width:1004px;height:12px;background:#2c2b2e;border-bottom:1px solid #201f21"></div>
    <div class="abs" style="left:863px;top:108px;width:1px;height:12px;background:#454447"></div>
    <div class="abs" style="left:947px;top:108px;width:1px;height:12px;background:#454447"></div>
    <div class="abs" style="left:988px;top:108px;width:1px;height:12px;background:#454447"></div>
    <div class="abs" style="left:1055px;top:108px;width:1px;height:12px;background:#454447"></div>
    <div class="abs gf sl" style="left:866px;top:108px;letter-spacing:-0.45px">Game</div>
    <div class="abs gf sl" style="left:950px;top:108px;letter-spacing:-0.2px">Players</div>
    <div class="abs gf sl" style="left:991px;top:108px;letter-spacing:-0.3px">Map</div>
    <div class="abs gf sl" style="left:1058.5px;top:108px;letter-spacing:-0.22px">Latency</div>
    <!-- selected row -->
    <div class="abs" style="left:92px;top:123px;width:1002px;height:11px;background:#a88d2c"></div>
    <div class="abs gf sl" style="left:867px;top:122.5px;letter-spacing:-0.26px;color:#f0ead2">Zombie Plague [CSO]</div>
    <div class="abs gf sl" style="left:951px;top:122.5px;letter-spacing:-0.2px;color:#f0ead2">3 / 32</div>
    <div class="abs gf sl" style="left:992px;top:122.5px;letter-spacing:-0.05px;color:#f0ead2">zm_zombust_x...</div>
    <div class="abs gf sl" style="left:1060px;top:122.5px;letter-spacing:-0.6px;color:#f0ead2">171</div>
    <!-- list scrollbar -->
    <div class="abs" style="left:1096px;top:108px;width:13px;height:654px;background:#3a393c"></div>
    <svg class="abs" style="left:1099px;top:112px" width="7" height="4" viewBox="0 0 7 4"><path d="M3.5 0 L7 4 H0Z" fill="#6b6a6d"/></svg>
    <svg class="abs" style="left:1099px;top:753px" width="7" height="4" viewBox="0 0 7 4"><path d="M3.5 4 L7 0 H0Z" fill="#6b6a6d"/></svg>
    <svg class="abs" style="left:1099px;top:55px" width="9" height="9" viewBox="0 0 9 9"><path d="M1 1 L8 8 M8 1 L1 8" stroke="#dcdcdc" stroke-width="1.7"/></svg>
    <!-- bottom buttons -->
    <div class="btn gf" style="left:95px;top:770px;width:80px;letter-spacing:-0.15px">Change filters</div>
    <div class="btn gf" style="left:789px;top:770px;width:106px;letter-spacing:-0.12px">Add Current Server</div>
    <div class="btn gf" style="left:900px;top:770px;width:73px;letter-spacing:-0.08px">Add a Server</div>
    <div class="btn gf" style="left:976px;top:770px;width:70px;letter-spacing:0.1px">Refresh</div>
    <div class="btn gf" style="left:1051px;top:770px;width:56px;letter-spacing:-0.13px">Connect</div>
    <svg class="abs" style="left:1103px;top:808px" width="10" height="10" viewBox="0 0 10 10"><path d="M0.5 9.5 L9.5 0.5 M4 9.5 L9.5 4 M7.2 9.5 L9.5 7.2" stroke="#5a595c" stroke-width="1"/></svg>

    <!-- console window -->
    <div id="console" class="abs" style="left:30px;top:14px;width:419px;height:300px;background:#302f32">
      <div class="abs gf" style="left:11px;top:7px;font-size:11.5px;color:#d8d7d9;letter-spacing:-0.44px;line-height:14px">Console</div>
      <svg class="abs" style="left:404px;top:8px" width="8" height="8" viewBox="0 0 8 8"><path d="M0.8 0.8 L7.2 7.2 M7.2 0.8 L0.8 7.2" stroke="#dcdcdc" stroke-width="1.6"/></svg>
      <div class="abs" style="left:5px;top:28px;width:409px;height:242px;background:#29272a;border:1px solid #262527;border-right-color:#454447;border-bottom-color:#454447;overflow:hidden">
      <div class="cl gf" style="top:12.9px;letter-spacing:-0.226px">sliva killed his teammate dobikann</div>
      <div class="cl gf" style="top:25.64px;letter-spacing:-0.103px"><span class="g">[Info] </span><span class="y">Press </span><span class="g">E </span><span class="y">to pass through your teammates</span></div>
      <div class="cl gf" style="top:51.1px;letter-spacing:-0.183px">sliva killed his teammate DARKNINJA</div>
      <div class="cl gf" style="top:63.84px;letter-spacing:0.032px">*** NINO killed DenYsa with a headshot from ak47 ***</div>
      <div class="cl gf" style="top:76.57px;letter-spacing:-0.082px"><span class="g">[CSO] </span><span class="y">sliva Used a </span><span class="g">[ Knife-Blink ] </span><span class="y">!</span></div>
      <div class="cl gf" style="top:102.04px;letter-spacing:-0.082px"><span class="g">[CSO] </span><span class="y">sliva Used a </span><span class="g">[ Knife-Blink ] </span><span class="y">!</span></div>
      <div class="cl gf" style="top:127.51px;letter-spacing:0.168px"><span class="g">[HALF VIP][LVL: </span><span class="r">9</span><span class="g">] </span><span class="r">dobikann </span><span class="y">: **** allah</span></div>
      <div class="cl gf" style="top:152.98px;letter-spacing:-0.169px">swenzy dropped</div>
      <div class="cl gf" style="top:165.72px;letter-spacing:-0.157px">swenzy has left the game</div>
      <div class="cl gf" style="top:178.46px;letter-spacing:-0.096px">NINO killed SERVER[.]CSOMOD[.]C0M [199] with ak47</div>
      <div class="cl gf" style="top:191.19px;letter-spacing:-0.205px">sliva killed his teammate NINO</div>
      <div class="cl gf" style="top:203.92px;letter-spacing:-0.216px">dobikann dropped</div>
      <div class="cl gf" style="top:216.66px;letter-spacing:-0.183px">dobikann has left the game</div>
      <div class="cl gf" style="top:229.4px;letter-spacing:-0.253px">sliva killed his teammate DEAD&lt;soul&gt;</div>
      </div>
      <div class="abs" style="left:402px;top:29px;width:11px;height:240px;background:#3a393c"></div>
      <div class="abs" style="left:402px;top:215px;width:11px;height:13px;background:#555457"></div>
      <svg class="abs" style="left:404px;top:31px" width="7" height="4" viewBox="0 0 7 4"><path d="M3.5 0 L7 4 H0Z" fill="#6b6a6d"/></svg>
      <svg class="abs" style="left:404px;top:262px" width="7" height="4" viewBox="0 0 7 4"><path d="M3.5 4 L7 0 H0Z" fill="#8a898c"/></svg>
      <div class="abs" style="left:5px;top:276px;width:355px;height:18px;background:#29272a;border:1px solid #232224;border-right-color:#454447;border-bottom-color:#454447"></div>
      <div class="abs" style="left:9px;top:279px;width:1px;height:12px;background:#bdbcbe"></div>
      <div class="abs gf" style="left:366px;top:276px;width:48px;height:18px;border:1.5px solid #171618;font-size:9.8px;line-height:15px;color:#d2d1d3;padding-left:3px;letter-spacing:-0.05px;white-space:nowrap">Submit</div>
      <svg class="abs" style="left:407px;top:289px" width="10" height="10" viewBox="0 0 10 10"><path d="M0.5 9.5 L9.5 0.5 M4 9.5 L9.5 4 M7.2 9.5 L9.5 7.2" stroke="#8a898c" stroke-width="1"/></svg>
    </div>
    <!-- text cursor (I-beam) -->
    <svg class="abs" style="left:282.5px;top:175px" width="6" height="13" viewBox="0 0 6 13"><path d="M0.500 0.600 H2.200 Q3 0.600 3 1.400 Q3 0.600 3.800 0.600 H5.500 M3 1.400 V11.600 M0.500 12.400 H2.200 Q3 12.400 3 11.600 Q3 12.400 3.800 12.400 H5.500" fill="none" stroke="#b8b8b8" stroke-width="1.100"/></svg>

    <!-- controls overlay -->
    <div class="abs" style="left:0;top:784px;width:1200px;height:37px;background:rgba(31,31,32,.740)"></div>
    <div class="abs" style="left:0;top:821px;width:1200px;height:63px;background:#1b1b1b"></div>
    <div class="abs" style="left:0;top:884px;width:1200px;height:20px;background:#161616"></div>
  </div>
  <div class="abs" style="left:1148px;top:24px;width:45px;height:45px;background:#483808;border-radius:3px"></div>
  <svg class="abs" style="left:1148px;top:24px" width="45" height="45" viewBox="0 0 45 45"><path d="M10 8 L10.600 2.500 L16 7 L22.500 1 L29 7 L34.400 2.500 L35 8 L35 22 H10Z" fill="#fbfbf8"/><circle cx="22.500" cy="23.500" r="13.600" fill="#fbfbf8"/><path d="M8.400 45 Q9 35 22.500 35 Q36 35 36.600 45Z" fill="#fbfbf8"/><path d="M10.200 21.500 H34.800 Q34.200 28.500 28.800 28.500 Q24 28.500 22.800 23.800 H22.200 Q21 28.500 16.200 28.500 Q10.800 28.500 10.200 21.500Z" fill="#3b2d06"/></svg>
  <div id="mptitle" class="abs">
    <svg class="abs" style="left:16px;top:7.700px" width="16" height="16" viewBox="0 0 16 16"><path d="M1.7 6.9 L8 1.3 L14.3 6.9 V14.4 H9.9 V9.6 H6.1 V14.4 H1.7Z" fill="none" stroke="#fff" stroke-width="1.25" stroke-linejoin="round"/></svg>
    <svg class="abs" style="left:58px;top:6px" width="20" height="20" viewBox="0 0 20 20"><defs><linearGradient id="g1" x1="0" y1="0" x2="1" y2="1"><stop offset="0" stop-color="#f08a3c"/><stop offset=".55" stop-color="#c45f8e"/><stop offset="1" stop-color="#7b4fd0"/></linearGradient></defs><circle cx="10" cy="10" r="8.6" fill="#333234" stroke="url(#g1)" stroke-width="1.7"/><path d="M7.6 5.8 L14 10 L7.6 14.2Z" fill="#fff"/></svg>
    <div class="abs" style="left:88px;top:9.500px;font-size:12.4px;color:#fff;letter-spacing:-0.19px;white-space:nowrap;line-height:15px;-webkit-text-stroke:0.200px #fff">Media Player</div>
    <svg class="abs" style="left:1079px;top:15px" width="10" height="1" viewBox="0 0 10 1"><rect width="10" height="1" fill="#fff"/></svg>
    <svg class="abs" style="left:1125.5px;top:10.5px" width="11" height="11" viewBox="0 0 11 11"><rect x="0.500" y="0.500" width="10" height="10" rx="1.200" fill="none" stroke="#fff" stroke-width="1"/></svg>
    <svg class="abs" style="left:1171.5px;top:10.5px" width="11" height="11" viewBox="0 0 11 11"><path d="M0.500 0.500 L10.500 10.500 M10.500 0.500 L0.500 10.500" stroke="#fff" stroke-width="1.100"/></svg>
  </div>
  <div id="mpctl" class="abs" style="left:0;top:0;width:1200px;height:932px">
    <div class="abs" style="left:16px;top:826px;font-size:11.5px;color:#fff;letter-spacing:-0.5px;white-space:nowrap;line-height:14px">0:00:11</div>
    <div class="abs" style="left:1145px;top:826px;font-size:11.5px;color:#fff;letter-spacing:-0.2px;white-space:nowrap;line-height:14px">0:00:06</div>
    <div class="abs" style="left:77px;top:830px;width:1046px;height:4px;border-radius:2px;background:#8c8c8c"></div>
    <div class="abs" style="left:77px;top:830px;width:686px;height:4px;border-radius:2px;background:#f5843c"></div>
    <div class="abs" style="left:753px;top:822px;width:20px;height:20px;border-radius:10px;background:#444"></div>
    <div class="abs" style="left:757.5px;top:826.5px;width:11px;height:11px;border-radius:6px;background:#f5843c"></div>
    <div class="abs" style="left:15px;top:878px;font-size:20px;font-weight:700;color:#fff;letter-spacing:-0.62px;white-space:nowrap;line-height:25px">20250605_105813</div>
    <!-- shuffle (off) -->
    <svg class="abs" style="left:451px;top:880px" width="20" height="20" viewBox="0 0 20 20" fill="none" stroke="#fff" stroke-width="1.200" stroke-linecap="round" stroke-linejoin="round"><path d="M2.500 14.300 H4.500 C7.500 14.300 9 11.800 10 9.800 C11 7.800 12.300 6.200 14.800 6.200 H16.500"/><path d="M11.500 12.600 C12.400 13.600 13.400 14.300 14.800 14.300 H16.500"/><path d="M14.800 4.400 L16.800 6.200 L14.800 8"/><path d="M14.800 12.500 L16.800 14.300 L14.800 16.100"/><path d="M2.800 2.800 L17.200 17.200"/></svg>
    <!-- previous -->
    <svg class="abs" style="left:497px;top:882px" width="16" height="16" viewBox="0 0 16 16"><path d="M2 1.5 V14.5" stroke="#7a7a7a" stroke-width="1.2"/><path d="M14.5 1.5 V14.5 L4 8Z" fill="#7a7a7a"/></svg>
    <!-- back 10 -->
    <svg class="abs" style="left:539px;top:878px" width="20" height="22" viewBox="0 0 20 22" fill="none" stroke="#fff" stroke-width="1.200" stroke-linecap="round" stroke-linejoin="round"><path d="M3.400 8.500 C7 5.200 13.500 5.200 17 10.800"/><path d="M3 4.200 V8.800 H7.600"/><text x="10.600" y="19.800" font-family="Liberation Sans,sans-serif" font-size="10.600" fill="#fff" stroke="#fff" stroke-width="0.250" text-anchor="middle" letter-spacing="-0.100">10</text></svg>
    <!-- play -->
    <svg class="abs" style="left:575px;top:865px" width="50" height="50" viewBox="0 0 50 50"><defs><linearGradient id="g2" x1="0.100" y1="0.150" x2="0.950" y2="0.850"><stop offset="0" stop-color="#f28b33"/><stop offset=".400" stop-color="#e5683d"/><stop offset=".700" stop-color="#c0479a"/><stop offset="1" stop-color="#7e3cb4"/></linearGradient></defs><circle cx="25" cy="25" r="22.800" fill="#2b2b2b" stroke="url(#g2)" stroke-width="3.800"/><path d="M19.500 16.800 Q19.500 14.800 21.200 15.800 L34.600 23.800 Q36 25 34.600 26.200 L21.200 34.200 Q19.500 35.200 19.500 33.200Z" fill="#fff"/></svg>
    <!-- forward 30 -->
    <svg class="abs" style="left:641px;top:878px" width="20" height="22" viewBox="0 0 20 22" fill="none" stroke="#fff" stroke-width="1.200" stroke-linecap="round" stroke-linejoin="round"><path d="M16.600 8.500 C13 5.200 6.500 5.200 3 10.800"/><path d="M17 4.200 V8.800 H12.400"/><text x="9.800" y="19.800" font-family="Liberation Sans,sans-serif" font-size="10.600" fill="#fff" stroke="#fff" stroke-width="0.250" text-anchor="middle" letter-spacing="-0.100">30</text></svg>
    <!-- next -->
    <svg class="abs" style="left:686px;top:882px" width="16" height="16" viewBox="0 0 16 16"><path d="M14 1.5 V14.5" stroke="#7a7a7a" stroke-width="1.2"/><path d="M1.5 1.5 V14.5 L12 8Z" fill="#7a7a7a"/></svg>
    <!-- repeat off -->
    <svg class="abs" style="left:729px;top:880px" width="20" height="20" viewBox="0 0 20 20" fill="none" stroke="#fff" stroke-width="1.3" stroke-linecap="round" stroke-linejoin="round"><path d="M3 10 C3 6.5 5.5 4.5 8.5 4.5 H14.5"/><path d="M12.3 2.2 L14.8 4.5 L12.3 6.8"/><path d="M17 10 C17 13.5 14.5 15.5 11.5 15.5 H5.5"/><path d="M7.7 13.2 L5.2 15.5 L7.7 17.8"/><path d="M3 2.5 L17 17.5" stroke-width="1.2"/></svg>
    <!-- captions -->
    <svg class="abs" style="left:993.5px;top:883.5px" width="17" height="13" viewBox="0 0 17 13" fill="none" stroke="#fff" stroke-width="1.150" stroke-linecap="round"><rect x="0.700" y="0.700" width="15.600" height="11.600" rx="2"/><path d="M3 7 H7.200 M9 7 H13.800 M3 9.600 H5.800 M7.600 9.600 H13.800" stroke-width="1.100"/></svg>
    <!-- volume -->
    <svg class="abs" style="left:1037.5px;top:882.5px" width="18" height="15" viewBox="0 0 18 15" fill="none" stroke="#fff" stroke-width="1.150" stroke-linecap="round" stroke-linejoin="round"><path d="M1 5.300 H3.300 L6.700 2 V13 L3.300 9.700 H1Z"/><path d="M9.200 5.200 C10.300 6.500 10.300 8.500 9.200 9.800"/><path d="M11.300 3.300 C13.400 5.700 13.400 9.300 11.300 11.700"/><path d="M13.400 1.500 C16.400 4.900 16.400 10.100 13.400 13.500"/></svg>
    <!-- fullscreen -->
    <svg class="abs" style="left:1082.5px;top:882.5px" width="15" height="15" viewBox="0 0 15 15" fill="none" stroke="#fff" stroke-width="1.150" stroke-linecap="round" stroke-linejoin="round"><path d="M1 14 L14 1"/><path d="M8.800 1 H14 V6.200"/><path d="M1 8.800 V14 H6.200"/></svg>
    <!-- mini player -->
    <svg class="abs" style="left:1126.5px;top:883px" width="15" height="14" viewBox="0 0 15 14" fill="none" stroke="#fff" stroke-width="1.150" stroke-linecap="round" stroke-linejoin="round"><path d="M1.500 4.300 V2.400 Q1.500 0.800 3.100 0.800 H12.600 Q14.200 0.800 14.200 2.400 V11.600 Q14.200 13.200 12.600 13.200 H10"/><path d="M8.300 0.800 V7.500 H14.200"/><path d="M1 13.400 L5.800 8.600"/><path d="M2.500 8.400 H6 V11.900"/></svg>
    <!-- more -->
    <svg class="abs" style="left:1171px;top:888px" width="14" height="4" viewBox="0 0 14 4"><circle cx="1.8" cy="2" r="1.3" fill="#fff"/><circle cx="7" cy="2" r="1.3" fill="#fff"/><circle cx="12.2" cy="2" r="1.3" fill="#fff"/></svg>
  </div>
</div>

</div>
</body>
</html>
